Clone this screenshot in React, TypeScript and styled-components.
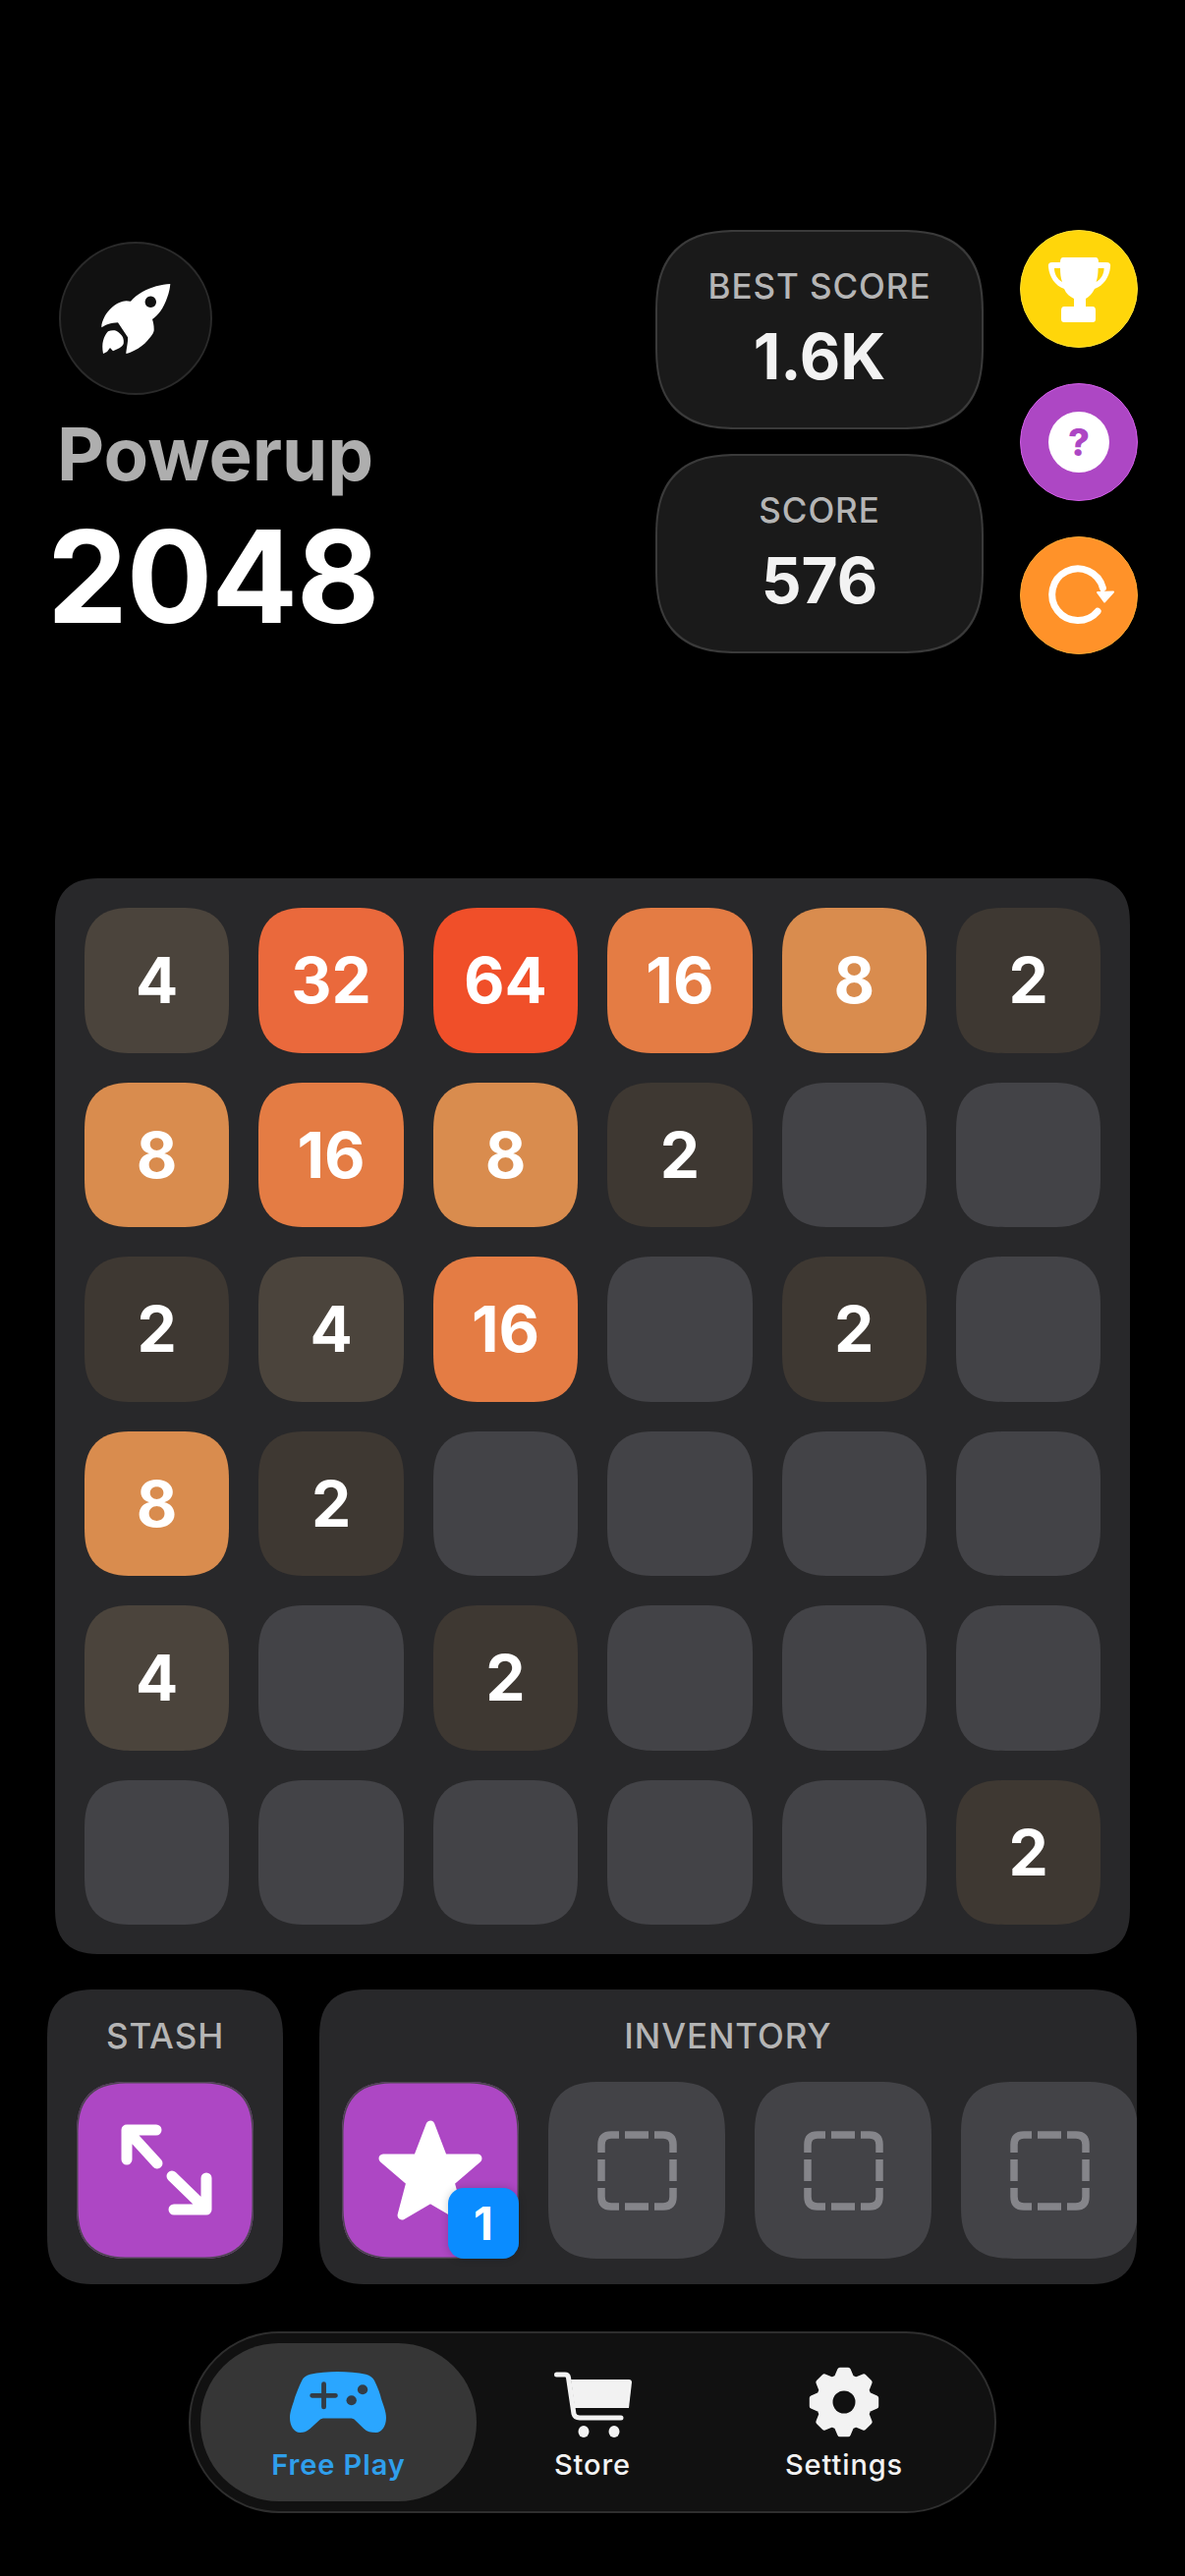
import { createGlobalStyle, css, styled } from "styled-components";

const board = [
  [4, 32, 64, 16, 8, 2],
  [8, 16, 8, 2, 0, 0],
  [2, 4, 16, 0, 2, 0],
  [8, 2, 0, 0, 0, 0],
  [4, 0, 2, 0, 0, 0],
  [0, 0, 0, 0, 0, 2],
];

const tileColors: Record<number, string> = {
  0: "#434347",
  2: "#3e3832",
  4: "#4b443c",
  8: "#d98c4e",
  16: "#e47c44",
  32: "#ea693c",
  64: "#f04f29",
};

// 8 tooth gear, outline worked out from the angle of each tooth
const gearPath = () => {
  const points: string[] = [];
  for (let i = 0; i < 8; i++) {
    const a = (i * Math.PI) / 4 - Math.PI / 2;
    const corners: [number, number][] = [
      [26, -0.3],
      [33, -0.13],
      [33, 0.13],
      [26, 0.3],
    ];
    corners.forEach(([r, d]) => {
      points.push(`${(36 + r * Math.cos(a + d)).toFixed(2)} ${(36 + r * Math.sin(a + d)).toFixed(2)}`);
    });
  }
  return `M${points.join("L")}Z`;
};

const Rocket = () => (
  <svg width="72" height="72" viewBox="0 0 72 72" fill="#fff">
    <path
      fillRule="evenodd"
      d="M71.3 1C62 1.5 52 4 43 9C38 12 34 15 31 18.7C28 18 25 18 23 18.7C15 20.5 8 28 4.7 33.7C2.5 38 1 42 1.3 45.3C4 44 6 42.5 8 42C11 41 15 40.5 18 40.3L28 55.3C28.5 60 26.5 67 26.3 72C29 71.5 32 70 34.7 68.7C40 66 44.5 63 48 58.7C52 54 55 51 54.7 47C54.7 43 54 40 53 37C56 34.5 59 32 61.3 28.7C64 25 66.5 20 68 15.3C70 10 71 5 71.3 1ZM51.3 13.6A5.7 5.7 0 1 0 51.31 13.6Z"
    />
    <path d="M3 72C2 67 2 62 3 58.7C4 55 6 51 8 49.3C11 48 14 48 16.3 48.7C19 50 22 53 23 55.3C24 58 24 60 23.7 62C22 65 20 66 18 67L13 69.3L10 66L7 70Z" />
  </svg>
);

const Trophy = () => (
  <svg width="120" height="120" viewBox="0 0 120 120" fill="#fff">
    <path
      fillRule="evenodd"
      d="M44 28H77Q80 28 80 33H88Q93 33 92 38C91 48 85 57 76 60C73 66 70 68 67 70V78H74Q77 78 77 82V91Q77 94 74 94H45Q42 94 42 91V82Q42 78 45 78H55V70C51 68 47 65 45 60C36 57 30 48 29 38Q28 33 33 33H41Q41 28 44 28ZM35 39H41C41 44 41.5 49 43 53C38 50 35 45 35 39ZM85.6 39H79.6C79.6 44 79 49 77.6 53C82.6 50 85.6 45 85.6 39Z"
    />
  </svg>
);

const Refresh = () => (
  <svg width="120" height="120" viewBox="0 0 120 120">
    <path d="M79.1 76.2A26.3 26.3 0 1 1 84.4 52.5" fill="none" stroke="#fff" strokeWidth="7" strokeLinecap="round" />
    <path d="M79 57L95 56.5L86 66.5Z" fill="#fff" stroke="#fff" strokeWidth="2" strokeLinejoin="round" />
  </svg>
);

const Expand = () => (
  <svg width="180" height="180" viewBox="0 0 180 180" fill="none" stroke="#fff" strokeWidth="11" strokeLinecap="round" strokeLinejoin="round">
    <path d="M81 49H51V79M51 49L82 83" />
    <path d="M99 130H132V98M132 130L97 96" />
  </svg>
);

const Star = () => (
  <svg width="180" height="180" viewBox="0 0 180 180" fill="#fff" stroke="#fff" strokeWidth="9" strokeLinejoin="round">
    <path d="M90 44L103 78H138L110 102L119 136L90 119L61 136L70 102L42 78H77Z" />
  </svg>
);

const DashedSlot = () => (
  <svg width="180" height="180" viewBox="0 0 180 180" fill="none" stroke="#85858a" strokeWidth="7.5">
    <path d="M54 72V64Q54 54 64 54H72" />
    <path d="M78 54H102" />
    <path d="M108 54H117Q127 54 127 64V72" />
    <path d="M127 79V101" />
    <path d="M127 108V117Q127 127 117 127H108" />
    <path d="M102 127H78" />
    <path d="M72 127H64Q54 127 54 117V108" />
    <path d="M54 101V79" />
  </svg>
);

const Controller = () => (
  <svg width="99" height="64" viewBox="0 0 96 64" preserveAspectRatio="none">
    <path
      fill="#2aa6ff"
      d="M20 3.7C28 2 38 1 47 1C57 1 67 2 75 3.7C79 5 82 7 83.5 10.3C87 18 89 23 90 28C92 35 95 41 95 48C95 56 91 63 85 63C80 63 76 62 73 59L63.5 49.5C62 48.5 61 48.5 60 48.5H34C32 48.5 31 49 29.5 50L20 59C16 62 14 63 10 63C4 63 0 56 0 48C0 41 3 35 5 27C7 22 9 16 11.8 10.3C13 7 16 5 20 3.7Z"
    />
    <path d="M22 25.3H45M33.5 13.7V37" stroke="#333c45" strokeWidth="4.7" strokeLinecap="round" />
    <circle cx="71.8" cy="19.3" r="5" fill="#333c45" />
    <circle cx="60.8" cy="30.3" r="5" fill="#333c45" />
  </svg>
);

const Cart = () => (
  <svg width="79" height="67" viewBox="0 0 79 67" fill="#f2f2f2">
    <path d="M2.5 3H11Q14 3 14.5 6L20 43Q21 47 26 47H68" fill="none" stroke="#f2f2f2" strokeWidth="5" strokeLinecap="round" />
    <path d="M17 8H76Q79 8 79 11L76 37H21Z" />
    <ellipse cx="30" cy="61" rx="5.5" ry="6" />
    <ellipse cx="61" cy="61" rx="5.5" ry="6" />
  </svg>
);

const Gear = () => (
  <svg width="72" height="72" viewBox="0 0 72 72">
    <path
      fill="#f2f2f2"
      stroke="#f2f2f2"
      strokeWidth="5"
      strokeLinejoin="round"
      fillRule="evenodd"
      d={gearPath()}
    />
    <circle cx="36" cy="36" r="11.5" fill="#111" />
  </svg>
);

const App = () => {
  return (
    <Page>
      <GlobalStyle />
      <Header>
        <Brand>
          <RocketBadge>
            <Rocket />
          </RocketBadge>
          <Subtitle>Powerup</Subtitle>
          <Title>2048</Title>
        </Brand>
        <Scores>
          <ScoreCard>
            <ScoreLabel>BEST SCORE</ScoreLabel>
            <ScoreValue>1.6K</ScoreValue>
          </ScoreCard>
          <ScoreCard>
            <ScoreLabel>SCORE</ScoreLabel>
            <ScoreValue>576</ScoreValue>
          </ScoreCard>
        </Scores>
        <Actions>
          <RoundButton $color="#ffd60a" $edge="#ffe135">
            <Trophy />
          </RoundButton>
          <RoundButton $color="#ad47c4" $edge="#d25ee8">
            <HelpDisc>?</HelpDisc>
          </RoundButton>
          <RoundButton $color="#ff9229" $edge="#ffa733">
            <Refresh />
          </RoundButton>
        </Actions>
      </Header>

      <Board>
        {board.flat().map((value, i) => (
          <Tile key={i} $value={value}>
            {value > 0 ? value : ""}
          </Tile>
        ))}
      </Board>

      <Trays>
        <Tray $width={240}>
          <TrayLabel>STASH</TrayLabel>
          <TrayRow $left={30}>
            <Slot $filled>
              <Expand />
            </Slot>
          </TrayRow>
        </Tray>
        <Tray $width={832}>
          <TrayLabel>INVENTORY</TrayLabel>
          <TrayRow $left={23}>
            <Slot $filled>
              <Star />
              <CountBadge>1</CountBadge>
            </Slot>
            <Slot>
              <DashedSlot />
            </Slot>
            <Slot>
              <DashedSlot />
            </Slot>
            <Slot>
              <DashedSlot />
            </Slot>
          </TrayRow>
        </Tray>
      </Trays>

      <Nav>
        <NavItem $width={281} $active>
          <NavIcon $lift={4}>
            <Controller />
          </NavIcon>
          <NavLabel $active>Free Play</NavLabel>
        </NavItem>
        <NavItem $width={236}>
          <NavIcon>
            <Cart />
          </NavIcon>
          <NavLabel>Store</NavLabel>
        </NavItem>
        <NavItem $width={276}>
          <NavIcon>
            <Gear />
          </NavIcon>
          <NavLabel>Settings</NavLabel>
        </NavItem>
      </Nav>
    </Page>
  );
};

export default App;

const squircle = css`
  corner-shape: superellipse(1.4);
`;

const GlobalStyle = createGlobalStyle`
  html, body {
    margin: 0;
    padding: 0;
    background: #000;
  }
  * {
    box-sizing: border-box;
  }
`;

const Page = styled.div`
  display: flex;
  flex-direction: column;
  width: 1206px;
  height: 2622px;
  padding-top: 234px;
  overflow: hidden;
  background: #000;
  font-family: Inter, "Liberation Sans", sans-serif;
`;

const Header = styled.header`
  display: flex;
  align-items: flex-start;
  height: 660px;
  padding: 0 48px 0 52px;
`;

const Brand = styled.div`
  display: flex;
  flex-direction: column;
  align-items: flex-start;
  padding-top: 12px;
`;

const RocketBadge = styled.div`
  display: flex;
  align-items: center;
  justify-content: center;
  width: 156px;
  height: 156px;
  margin-left: 8px;
  border: 2px solid #2a2a2a;
  border-radius: 50%;
  background: #111;
`;

const Subtitle = styled.div`
  margin: 15px 0 0 6px;
  color: #aeaeae;
  font-size: 74.4px;
  font-weight: 700;
  line-height: 90px;
`;

const Title = styled.div`
  margin: 14px 0 0 -4px;
  color: #fff;
  font-size: 130px;
  font-weight: 700;
  line-height: 132px;
  letter-spacing: -1.2px;
`;

const Scores = styled.div`
  display: flex;
  flex-direction: column;
  gap: 25px;
  margin-left: auto;
`;

const ScoreCard = styled.div`
  display: flex;
  flex-direction: column;
  align-items: center;
  width: 334px;
  height: 203px;
  padding-top: 33px;
  border: 2px solid #3a3a3a;
  border-radius: 86px;
  background: #1a1a1a;
  ${squircle}
`;

const ScoreLabel = styled.div`
  color: #b5b5b5;
  font-size: 35px;
  font-weight: 500;
  line-height: 44px;
  letter-spacing: 0.9px;
`;

const ScoreValue = styled.div`
  margin-top: 12px;
  color: #f2f2f2;
  font-size: 64px;
  font-weight: 700;
  line-height: 76px;
`;

const Actions = styled.div`
  display: flex;
  flex-direction: column;
  gap: 36px;
  margin-left: 37px;
`;

const RoundButton = styled.div<{ $color: string; $edge: string }>`
  display: flex;
  align-items: center;
  justify-content: center;
  width: 120px;
  height: 120px;
  border: 1.5px solid ${(p) => p.$edge};
  border-radius: 50%;
  background: ${(p) => p.$color};
  svg {
    flex: none;
  }
`;

const HelpDisc = styled.div`
  display: flex;
  align-items: center;
  justify-content: center;
  width: 62px;
  height: 62px;
  border-radius: 50%;
  background: #fff;
  color: #ad47c4;
  font-size: 38px;
  font-weight: 800;
  line-height: 62px;
`;

const Board = styled.section`
  display: grid;
  grid-template-columns: repeat(6, 147.4px);
  grid-auto-rows: 147.5px;
  gap: 30px;
  width: 1094px;
  height: 1095px;
  margin-left: 56px;
  padding: 30px;
  border-radius: 48px;
  background: #28282a;
  ${squircle}
`;

const Tile = styled.div<{ $value: number }>`
  display: flex;
  align-items: center;
  justify-content: center;
  border-radius: 50px;
  background: ${(p) => tileColors[p.$value]};
  color: #fff;
  font-size: 64px;
  font-weight: 700;
  ${squircle}
`;

const Trays = styled.section`
  display: flex;
  gap: 37px;
  height: 300px;
  margin: 36px 0 0 48px;
`;

const Tray = styled.div<{ $width: number }>`
  width: ${(p) => p.$width}px;
  height: 300px;
  overflow: hidden;
  border-radius: 50px;
  background: #28282a;
  ${squircle}
`;

const TrayLabel = styled.div`
  height: 94px;
  padding-top: 25px;
  color: #b5b5b5;
  font-size: 35px;
  font-weight: 500;
  line-height: 44px;
  text-align: center;
  letter-spacing: 0.9px;
`;

const TrayRow = styled.div<{ $left: number }>`
  display: flex;
  gap: 30px;
  padding-left: ${(p) => p.$left}px;
`;

const Slot = styled.div<{ $filled?: boolean }>`
  position: relative;
  display: flex;
  flex: none;
  width: 180px;
  height: 180px;
  border-radius: 54px;
  background: ${(p) => (p.$filled ? "#ad47c4" : "#434347")};
  box-shadow: ${(p) => (p.$filled ? "inset 0 0 0 1.5px #4c4450" : "none")};
  ${squircle}
`;

const CountBadge = styled.div`
  position: absolute;
  right: 0;
  bottom: 0;
  display: flex;
  align-items: center;
  justify-content: center;
  width: 72px;
  height: 72px;
  border-radius: 16px;
  background: #0a8cff;
  box-shadow: 0 0 8px rgba(0, 0, 0, 0.2);
  color: #fff;
  font-size: 46px;
  font-weight: 700;
`;

const Nav = styled.nav`
  display: flex;
  width: 822px;
  height: 185px;
  margin: 48px 0 0 192px;
  padding: 10px;
  border: 2px solid #2e2e2e;
  border-radius: 92px;
  background: #111;
`;

const NavItem = styled.div<{ $width: number; $active?: boolean }>`
  display: flex;
  flex: none;
  flex-direction: column;
  align-items: center;
  width: ${(p) => p.$width}px;
  height: 161px;
  padding-top: 24px;
  border-radius: 80px;
  background: ${(p) => (p.$active ? "#363636" : "transparent")};
`;

const NavIcon = styled.div<{ $lift?: number }>`
  display: flex;
  align-items: flex-end;
  justify-content: center;
  height: 72px;
  padding-bottom: ${(p) => p.$lift ?? 0}px;
`;

const NavLabel = styled.div<{ $active?: boolean }>`
  margin-top: 10px;
  color: ${(p) => (p.$active ? "#2f9fec" : "#f2f2f2")};
  font-size: 29px;
  font-weight: ${(p) => (p.$active ? 600 : 500)};
  line-height: 36px;
  letter-spacing: 0.9px;
`;
